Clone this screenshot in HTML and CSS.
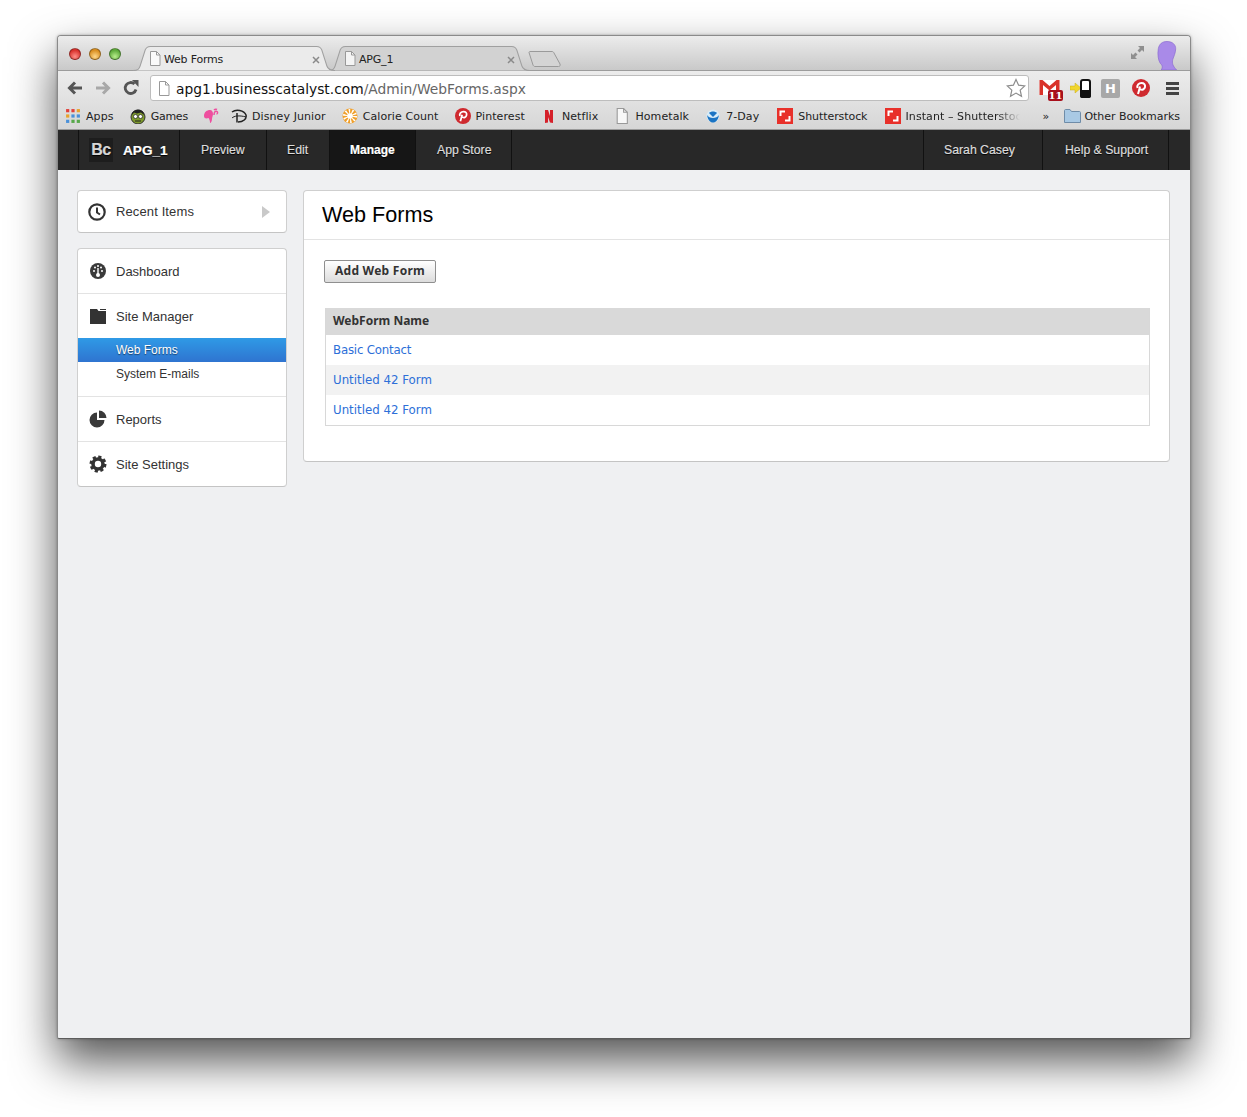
FILE: index.html
```html
<!DOCTYPE html>
<html lang="en">
<head>
<meta charset="utf-8">
<title>Web Forms</title>
<link rel="stylesheet" href="styles.css">
</head>
<body>
<div class="window">
  <div class="tabstrip">
    <div class="lights">
      <span class="light red"></span><span class="light amber"></span><span class="light green"></span>
    </div>
    <div class="tab active">
      <svg class="tabshape" viewBox="0 0 199 25" preserveAspectRatio="none"><path d="M0 24.5C5 24.5 6 23 7 20L12 4C13 1.500 14 .5 17 .5H181C184 .5 185 1.500 186 4L191 20C192 23 194 24.500 199 24.500" fill="#ebebeb" stroke="#a0a0a0"/></svg>
      <svg class="page" viewBox="0 0 12 15"><path d="M1.500.5H7.500L11 4V14.500H1.500Z" fill="#fafafa" stroke="#999"/><path d="M7.500.5V4H11" fill="none" stroke="#999"/></svg>
      <span class="tabtitle">Web Forms</span>
      <svg class="close" viewBox="0 0 8 8"><path d="M1 1L7 7M7 1L1 7" stroke="#8a8a8a" stroke-width="1.500"/></svg>
    </div>
    <div class="tab">
      <svg class="tabshape" viewBox="0 0 199 25" preserveAspectRatio="none"><path d="M0 24.5C5 24.5 6 23 7 20L12 4C13 1.500 14 .5 17 .5H181C184 .5 185 1.500 186 4L191 20C192 23 194 24.500 199 24.500" fill="#d2d2d2" stroke="#a0a0a0"/></svg>
      <svg class="page" viewBox="0 0 12 15"><path d="M1.500.5H7.500L11 4V14.500H1.500Z" fill="#f4f4f4" stroke="#999"/><path d="M7.500.5V4H11" fill="none" stroke="#999"/></svg>
      <span class="tabtitle">APG_1</span>
      <svg class="close" viewBox="0 0 8 8"><path d="M1 1L7 7M7 1L1 7" stroke="#8a8a8a" stroke-width="1.500"/></svg>
    </div>
    <svg class="newtab" viewBox="0 0 33 16"><path d="M1 1.500C1 1 1.500 .5 2 .5H24C25 .5 25.500 1 26 2L32 13C32.500 14.500 32 15.500 30.500 15.500H7C6 15.500 5.500 15 5 14Z" fill="#d4d4d4" stroke="#9a9a9a"/></svg>
    <svg class="expand" viewBox="0 0 15 15"><path d="M8 1H14V7L12 5L9.500 7.500L7.500 5.500L10 3ZM1 8L3 10L5.500 7.500L7.500 9.500L5 12L7 14H1Z" fill="#8f8f8f"/></svg>
    <svg class="avatar" viewBox="0 0 22 30"><path d="M5 30C7 27 6 25 4 23C2 20 1 14 2 8C3 3 6 .5 11 .5C17 .5 20 4 20 8C20 12 18 16 17 19C16 23 17 26 21 30Z" fill="#a98ae8" stroke="#8a6bd0" stroke-width=".7"/></svg>
  </div>

  <div class="toolbar">
    <svg class="tool" viewBox="0 0 16 14"><path d="M15 7H3M8 1.500L2.500 7L8 12.500" fill="none" stroke="#555" stroke-width="3"/></svg>
    <svg class="tool" viewBox="0 0 16 14"><path d="M1 7H13M8 1.500L13.500 7L8 12.500" fill="none" stroke="#a8a8a8" stroke-width="3"/></svg>
    <svg class="tool" viewBox="0 0 16 16"><path d="M13 9.500A5.500 5.500 0 1 1 11.500 4" fill="none" stroke="#555" stroke-width="2.800"/><path d="M9 0H15.500V7Z" fill="#555"/></svg>
    <div class="omnibox">
      <svg class="omnipage" viewBox="0 0 12 15"><path d="M1.500.5H7.500L11 4V14.500H1.500Z" fill="#fff" stroke="#999"/><path d="M7.500.5V4H11" fill="none" stroke="#999"/></svg>
      <span class="url">apg1.businesscatalyst.com<span class="urlpath">/Admin/WebForms.aspx</span></span>
      <svg class="star" viewBox="0 0 20 20"><path d="M10 1.500L12.600 7.200L18.800 7.900L14.200 12.100L15.500 18.300L10 15.100L4.500 18.300L5.800 12.100L1.200 7.900L7.400 7.200Z" fill="#fff" stroke="#8c8c8c" stroke-width="1.200"/></svg>
    </div>
    <div class="ext gmail">
      <svg class="gm" viewBox="0 0 20 16"><path d="M0 1H20V16H0Z" fill="#fff"/><path d="M0 1H3L10 7L17 1H20V16H16.500V6L10 11.500L3.500 6V16H0Z" fill="#d9332a"/></svg>
      <span class="badge">11</span>
    </div>
    <svg class="phone" viewBox="0 0 21 19"><path d="M0 7H5V4L11 9L5 14V11H0Z" fill="#f1d62e" stroke="#c9ad16" stroke-width=".5"/><rect x="11" y="1" width="9" height="17" rx="2" fill="#fff" stroke="#111" stroke-width="2"/><rect x="10" y="11" width="11" height="8" rx="2" fill="#111"/></svg>
    <span class="hbox">H</span>
    <svg class="pin" viewBox="0 0 18 18"><circle cx="9" cy="9" r="9" fill="#cf2a2f"/><path d="M6 15C7 12 7.500 9.500 8 7.500M5.500 9C4.500 6 7 4 9.500 4C12 4 13.500 5.500 13 8C12.500 10.500 10 11.500 8 10" fill="none" stroke="#fff" stroke-width="2"/></svg>
    <svg class="menuicon" viewBox="0 0 13 13"><path d="M0 0H13V3H0ZM0 5H13V8H0ZM0 10H13V13H0Z" fill="#444"/></svg>
  </div>

  <div class="bookmarks">
    <div class="bm">
      <svg class="bi" viewBox="-1 0 15 15"><g><rect x="0" y="1" width="3" height="3" fill="#e2403a"/><rect x="5" y="1" width="3" height="3" fill="#e2403a"/><rect x="10" y="1" width="3" height="3" fill="#e8a32c"/><rect x="0" y="6" width="3" height="3" fill="#e8a32c"/><rect x="5" y="6" width="3" height="3" fill="#4a90d9"/><rect x="10" y="6" width="3" height="3" fill="#4a90d9"/><rect x="0" y="11" width="3" height="3" fill="#4a90d9"/><rect x="5" y="11" width="3" height="3" fill="#57a84a"/><rect x="10" y="11" width="3" height="3" fill="#57a84a"/></g></svg>
      <span>Apps</span>
    </div>
    <div class="bm">
      <svg class="bi" viewBox="0 0 16 16"><circle cx="8" cy="9" r="7" fill="#7d9a2c" stroke="#333"/><path d="M2 7C1 1 14 -1 14 7L11 4.500L7 5.500L4 4.500Z" fill="#222"/><circle cx="5.500" cy="8.500" r="2" fill="#fff" stroke="#222" stroke-width=".7"/><circle cx="10.500" cy="8.500" r="2" fill="#fff" stroke="#222" stroke-width=".7"/><path d="M5 13H11" stroke="#222"/></svg>
      <span class="games">Games</span>
    </div>
    <div class="bm barbie">
      <svg class="bi" viewBox="0 0 16 16"><path d="M1 8C1 4 4 2 7 2C9 2 10 4 10 6C10 8 9 9 9 11C9 13 8 15 7 15C7 13 6.500 11 5.500 10C3.500 11 1 10.500 1 8Z" fill="#ee4f9f"/><path d="M11 7C11 4 12.500 2.500 14 3.500C15 4.500 14.500 6 13.500 6M11 2C12 1 13 1 14 1.500" fill="none" stroke="#ee4f9f" stroke-width="1.500"/></svg>
    </div>
    <div class="bm">
      <svg class="bi" viewBox="0 0 16 16"><path d="M1 4C5 1 13 2 15 7C16 11 12 14 7 14M6 5V14.500" fill="none" stroke="#222" stroke-width="1.500"/><path d="M1 10C3 8 8 7 15 9" fill="none" stroke="#222"/></svg>
      <span>Disney Junior</span>
    </div>
    <div class="bm">
      <svg class="bi" viewBox="0 0 16 16"><circle cx="8" cy="8" r="7.500" fill="#f0a02c"/><circle cx="8" cy="8" r="4.500" fill="none" stroke="#fff" stroke-width="5" stroke-dasharray="1.200 1.600"/><circle cx="8" cy="8" r="2.800" fill="#fff"/></svg>
      <span>Calorie Count</span>
    </div>
    <div class="bm">
      <svg class="bi" viewBox="0 0 18 18"><circle cx="9" cy="9" r="9" fill="#cf2a2f"/><path d="M6 15C7 12 7.500 9.500 8 7.500M5.500 9C4.500 6 7 4 9.500 4C12 4 13.500 5.500 13 8C12.500 10.500 10 11.500 8 10" fill="none" stroke="#fff" stroke-width="2"/></svg>
      <span>Pinterest</span>
    </div>
    <div class="bm">
      <svg class="bi" viewBox="0 0 16 16"><path d="M4 2H7L9 8V2H12V15L9 14.500L7 9V14.500L4 15Z" fill="#d5202a"/></svg>
      <span>Netflix</span>
    </div>
    <div class="bm">
      <svg class="bi" viewBox="0 0 12 15"><path d="M1.500.5H7.500L11 4V14.500H1.500Z" fill="#f8f8f8" stroke="#999"/><path d="M7.500.5V4H11" fill="none" stroke="#999"/></svg>
      <span>Hometalk</span>
    </div>
    <div class="bm sevenday">
      <svg class="bi" viewBox="0 0 16 16"><circle cx="8" cy="8" r="6.500" fill="#d8ecf8"/><path d="M2 7C4 11 12 11 14 7C13 13 10 14.500 8 14.500C6 14.500 3 13 2 7Z" fill="#1a74c4"/><path d="M4 5C6 3 10 3 12 5L8 9Z" fill="#1a74c4"/></svg>
      <span>7-Day</span>
    </div>
    <div class="bm shutter">
      <svg class="bi" viewBox="0 0 16 16"><rect width="16" height="16" fill="#e8302a"/><path d="M3.500 8V3.500H8M12.500 8V12.500H8" fill="none" stroke="#fff" stroke-width="2"/></svg>
      <span>Shutterstock</span>
    </div>
    <div class="bm">
      <svg class="bi" viewBox="0 0 16 16"><rect width="16" height="16" fill="#e8302a"/><path d="M3.500 8V3.500H8M12.500 8V12.500H8" fill="none" stroke="#fff" stroke-width="2"/></svg>
      <span class="faded">Instant – Shutterstoc</span>
    </div>
    <span class="more">»</span>
    <div class="bm other">
      <svg class="folder" viewBox="0 0 17 14"><path d="M.5 13.500V1.500C.5 1 1 .5 1.500 .5H6L7.500 2.500H15.500C16 2.500 16.500 3 16.500 3.500V13.500Z" fill="#a9c9e4" stroke="#6f8ca8"/></svg>
      <span>Other Bookmarks</span>
    </div>
  </div>

  <nav class="appnav">
    <div class="brand">
      <span class="bc">Bc</span>
      <span class="sitename">APG_1</span>
    </div>
    <a class="navitem w-preview">Preview</a>
    <a class="navitem w-edit">Edit</a>
    <a class="navitem w-manage">Manage</a>
    <a class="navitem w-store">App Store</a>
    <div class="navspace"></div>
    <a class="navitem w-user">Sarah Casey</a>
    <a class="navitem w-help">Help &amp; Support</a>
  </nav>

  <div class="workspace">
    <aside class="sidebar">
      <div class="card recent">
        <svg class="sicon" viewBox="0 0 18 18"><circle cx="9" cy="9" r="7.700" fill="none" stroke="#333" stroke-width="2.200"/><path d="M9 4.500V9.500L12 11.500" fill="none" stroke="#333" stroke-width="2"/></svg>
        <span class="label">Recent Items</span>
        <svg class="arrow" viewBox="0 0 8 12"><path d="M0 0L8 6L0 12Z" fill="#c9c9c9"/></svg>
      </div>
      <div class="card menu">
        <div class="row">
          <svg class="sicon" viewBox="0 0 18 18"><circle cx="9" cy="9" r="8" fill="#3a3a3a"/><g fill="#fff"><circle cx="5" cy="9" r="1"/><circle cx="6" cy="5.500" r="1"/><circle cx="9" cy="4" r="1"/><circle cx="12" cy="5.500" r="1"/><circle cx="13" cy="9" r="1"/></g><path d="M9 6V12" stroke="#fff" stroke-width="1.400"/><circle cx="9" cy="13" r="2" fill="#fff"/></svg>
          <span class="label">Dashboard</span>
        </div>
        <div class="row group">
          <svg class="sicon" viewBox="0 0 18 18"><path d="M1 2H8L9.500 4H17V17H1Z" fill="#333"/><path d="M11 2H17V3H11Z" fill="#333"/></svg>
          <span class="label">Site Manager</span>
        </div>
        <a class="sub selected">Web Forms</a>
        <a class="sub last">System E-mails</a>
        <div class="row">
          <svg class="sicon" viewBox="0 0 18 18"><path d="M8 2.500V10H15.500A7.500 7.500 0 1 1 8 2.500Z" fill="#3a3a3a"/><path d="M10 .5A7.500 7.500 0 0 1 17.500 8H10Z" fill="#3a3a3a"/></svg>
          <span class="label">Reports</span>
        </div>
        <div class="row">
          <svg class="sicon" viewBox="0 0 18 18"><circle cx="9" cy="9" r="5" fill="none" stroke="#333" stroke-width="3.600"/><circle cx="9" cy="9" r="7" fill="none" stroke="#333" stroke-width="3" stroke-dasharray="3.100 2.400"/></svg>
          <span class="label">Site Settings</span>
        </div>
      </div>
    </aside>

    <main class="panel">
      <h1 class="title">Web Forms</h1>
      <div class="panelbody">
        <button class="addbtn" type="button">Add Web Form</button>
        <table class="forms">
          <thead><tr><th>WebForm Name</th></tr></thead>
          <tbody>
            <tr class="first"><td><a>Basic Contact</a></td></tr>
            <tr class="alt"><td><a>Untitled 42 Form</a></td></tr>
            <tr><td><a>Untitled 42 Form</a></td></tr>
          </tbody>
        </table>
      </div>
    </main>
  </div>
</div>
</body>
</html>
```

FILE: styles.css
```css
* { box-sizing: border-box; }
html, body { margin: 0; height: 100%; background: #fff; }
body { padding: 35px 56px 78px 57px; overflow: hidden; }

.window {
  width: 1134px;
  height: 1004px;
  display: flex;
  flex-direction: column;
  border: 1px solid #8a8a8a;
  border-bottom-color: #5c5c5c;
  border-radius: 4px 4px 2px 2px;
  background: #eff0f2;
  box-shadow: 0 22px 46px rgba(0,0,0,.68), 0 0 3px rgba(0,0,0,.3);
}

/* tab strip */
.tabstrip {
  height: 35px;
  flex: none;
  display: flex;
  align-items: flex-end;
  position: relative;
  background: linear-gradient(#ececec, #c9c9c9);
  border-bottom: 1px solid #9c9c9c;
  border-radius: 3px 3px 0 0;
}
.lights { position: absolute; left: 11px; top: 12px; display: flex; gap: 8px; }
.light { width: 12px; height: 12px; border-radius: 50%; border: 1px solid rgba(0,0,0,.35); }
.red { background: radial-gradient(circle at 50% 75%, #ff8f88, #d8312c 70%); }
.amber { background: radial-gradient(circle at 50% 75%, #ffd88a, #d98e20 70%); }
.green { background: radial-gradient(circle at 50% 75%, #b8ee8c, #5daa3a 70%); }

.tab {
  position: relative;
  width: 195px;
  height: 25px;
  display: flex;
  align-items: center;
  font: 11px "DejaVu Sans", sans-serif;
  letter-spacing: -.2px;
  color: #222;
  margin-bottom: -1px;
  padding: 2px 8px 0 15px;
}
.tab.active { z-index: 2; margin-left: 76px; }
.tabshape { position: absolute; left: -1px; top: 0; width: 202px; height: 25px; }
.page { position: relative; width: 12px; height: 15px; flex: none; margin-top: -2px; }
.tabtitle { position: relative; margin-left: 3px; flex: 1; }
.close { position: relative; width: 8px; height: 8px; flex: none; margin-right: 1px; }
.newtab { width: 33px; height: 16px; margin: 0 0 3px 4px; flex: none; }
.expand { position: absolute; right: 45px; top: 9px; width: 15px; height: 15px; }
.avatar { position: absolute; right: 12px; top: 5px; width: 22px; height: 29px; }

/* toolbar */
.toolbar {
  height: 32px;
  flex: none;
  display: flex;
  align-items: center;
  background: linear-gradient(#ececec, #e0e0e0);
  padding: 2px 0 0 9px;
}
.tool { width: 16px; height: 16px; margin-right: 12px; flex: none; }
.omnibox {
  width: 879px;
  height: 26px;
  margin-left: -1px;
  flex: none;
  display: flex;
  align-items: center;
  background: #fff;
  border: 1px solid #bdbdbd;
  border-radius: 3px;
  padding: 0 2px 0 7px;
}
.omnipage { width: 12px; height: 15px; flex: none; }
.url {
  margin-left: 6px;
  padding-top: 1px;
  flex: 1;
  font: 13.8px "DejaVu Sans", sans-serif;
  color: #111;
}
.urlpath { color: #666; }
.star { width: 20px; height: 20px; flex: none; }
.ext { position: relative; }
.gmail { width: 24px; height: 24px; margin-left: 10px; flex: none; }
.gm { position: absolute; left: 0; top: 3px; width: 21px; height: 16px; }
.badge {
  position: absolute;
  left: 9px;
  top: 14px;
  width: 15px;
  height: 11px;
  background: #a8101c;
  border-radius: 2px;
  color: #fff;
  font: bold 10px/11px "DejaVu Serif", serif;
  text-align: center;
}
.phone { width: 21px; height: 19px; margin-left: 7px; flex: none; }
.hbox {
  width: 19px;
  height: 19px;
  margin-left: 10px;
  flex: none;
  border-radius: 2px;
  background: #a8a8a8;
  color: #fff;
  font: bold 13px/19px "DejaVu Sans", sans-serif;
  text-align: center;
}
.pin { width: 18px; height: 18px; margin-left: 12px; flex: none; }
.menuicon { width: 13px; height: 13px; margin-left: 16px; flex: none; }

/* bookmarks */
.bookmarks {
  height: 27px;
  flex: none;
  display: flex;
  align-items: center;
  gap: 16.1px;
  padding-left: 7px;
  background: linear-gradient(#e0e0e0, #d6d6d6);
  border-bottom: 1px solid #9a9a9a;
  font: 11px "DejaVu Sans", sans-serif;
  letter-spacing: .08px;
  color: #222;
  white-space: nowrap;
}
.bm { display: flex; align-items: center; gap: 5px; flex: none; }
.bi { width: 16px; height: 16px; flex: none; }
.games { letter-spacing: -.25px; }
.barbie { margin: 0 -4px 0 -1px; }
.sevenday { margin-right: 2px; }
.shutter { margin-right: 1px; letter-spacing: -.08px; }
.faded {
  display: block;
  width: 114px;
  -webkit-mask-image: linear-gradient(to right, #000 80%, transparent);
  mask-image: linear-gradient(to right, #000 80%, transparent);
}
.more { margin-left: 7px; }
.other { margin-left: -2px; gap: 4px; letter-spacing: -.05px; }
.folder { width: 17px; height: 14px; flex: none; }

/* app nav */
.appnav {
  height: 40px;
  flex: none;
  display: flex;
  background: #282828;
  padding: 0 21px 0 20px;
  font: 12.25px "Liberation Sans", Arial, sans-serif;
  color: #dcdcdc;
  text-shadow: 0 1px 1px #000;
  -webkit-text-stroke: .2px;
}
.brand {
  width: 102px;
  display: flex;
  align-items: center;
  padding-left: 10px;
  border-left: 1px solid #111;
  border-right: 1px solid #111;
  flex: none;
}
.bc {
  width: 24px;
  height: 24px;
  background: #1d1d1d;
  color: #d6d6d6;
  font: bold 16px/24px "Liberation Sans", sans-serif;
  letter-spacing: -.6px;
  text-align: center;
}
.sitename { margin-left: 10px; font: bold 13.6px "Liberation Sans", sans-serif; color: #fff; }
.navitem {
  display: flex;
  align-items: center;
  padding-left: 21px;
  border-right: 1px solid #111;
  flex: none;
}
.w-preview { width: 87px; }
.w-edit { width: 63px; padding-left: 20px; }
.w-manage { width: 86px; background: #161616; color: #fff; font-weight: bold; font-size: 12px; padding-left: 20px; }
.w-store { width: 96px; }
.navspace { flex: 1; }
.w-user { width: 120px; border-left: 1px solid #111; padding-left: 20px; margin-left: -1px; margin-right: 1px; }
.w-help { width: 125px; padding-left: 21px; }

/* workspace */
.workspace {
  flex: 1;
  display: flex;
  align-items: flex-start;
  gap: 16px;
  padding: 20px 20px 0 19px;
}
.sidebar { width: 210px; flex: none; display: flex; flex-direction: column; gap: 15px; }
.card {
  background: #fff;
  border: 1px solid #cfcfcf;
  border-bottom-color: #c4c4c4;
  border-radius: 4px;
  font: 13px "Liberation Sans", Arial, sans-serif;
  color: #333;
}
.recent {
  height: 43px;
  display: flex;
  align-items: center;
  padding: 0 16px 0 10px;
}
.recent .label { letter-spacing: .12px; }
.sicon { width: 18px; height: 18px; flex: none; }
.label { margin-left: 10px; flex: 1; }
.arrow { width: 8px; height: 12px; flex: none; }
.row {
  height: 45px;
  display: flex;
  align-items: center;
  padding: 0 10px 0 11px;
  border-bottom: 1px solid #e3e3e3;
}
.row:last-child { height: 44px; border-bottom: 0; }
.row.group { height: 44px; border-bottom: 0; }
.row .label { margin-left: 9px; }
.sub {
  display: block;
  height: 24px;
  padding-left: 38px;
  font-size: 12px;
  line-height: 24px;
}
.selected {
  background: linear-gradient(#2f9ae6, #2f74d0);
  color: #fff;
  text-shadow: 0 1px 1px rgba(0,0,0,.5);
}
.last { height: 35px; border-bottom: 1px solid #e3e3e3; }

.panel {
  width: 867px;
  flex: none;
  height: 272px;
  background: #fff;
  border: 1px solid #cfcfcf;
  border-bottom-color: #c4c4c4;
  border-radius: 4px;
}
.title {
  height: 49px;
  margin: 0;
  padding-left: 18px;
  border-bottom: 1px solid #e3e3e3;
  font: normal 21.6px/47px "Liberation Sans", Arial, sans-serif;
  color: #000;
}
.panelbody { padding: 20px 19px 0 20px; }
.addbtn {
  display: block;
  width: 112px;
  height: 23px;
  padding: 0 0 2px;
  background: linear-gradient(#fff, #dcdcdc);
  border: 1px solid #8f8f8f;
  border-radius: 2px;
  font: bold 12px "Noto Sans", sans-serif;
  letter-spacing: .25px;
  color: #333;
}
.forms {
  width: 825px;
  margin: 25px 0 0 1px;
  border-collapse: collapse;
  font: 11.8px "DejaVu Sans", sans-serif;
  border: 1px solid #d8d8d8;
  border-top: 0;
}
.forms th {
  height: 27px;
  padding: 0 7px 2px;
  background: #d9d9d9;
  text-align: left;
  font: bold 12px "Noto Sans", sans-serif;
  color: #333;
}
.forms td { height: 30px; padding: 0 7px; }
.first a { letter-spacing: -.2px; }
.alt td { background: #f2f2f2; }
.forms a { color: #2d6fd8; }
```
